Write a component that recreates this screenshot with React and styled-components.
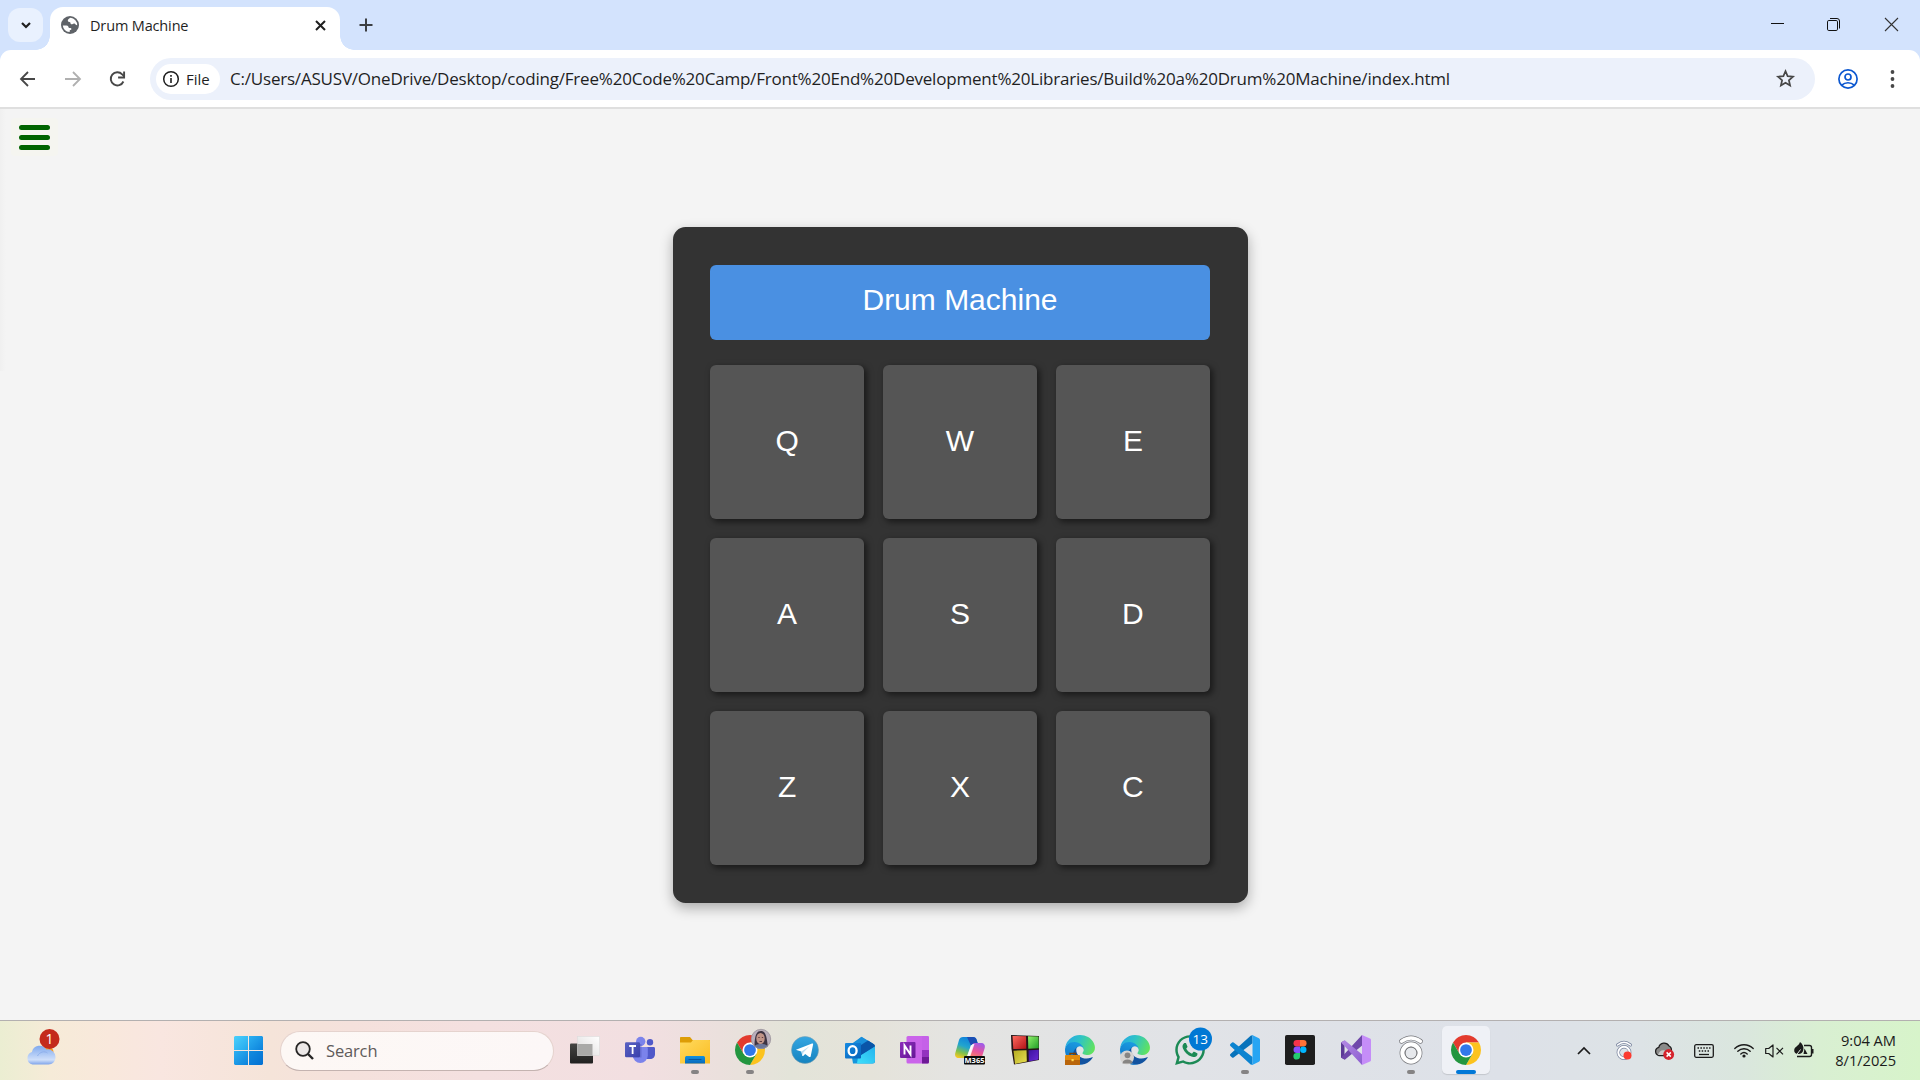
import React from "react";
import styled, { createGlobalStyle } from "styled-components";
import { FaWhatsapp } from "react-icons/fa";

const ui = `"Open Sans", "Noto Sans", sans-serif`;

const Global = createGlobalStyle`
  * { box-sizing: border-box; }
  body { margin: 0; background: #f4f4f4; font-family: ${ui}; overflow: hidden; }
  svg { display: block; flex: none; overflow: visible; }
`;

const Screen = styled.div`
  width: 1920px;
  height: 1080px;
  display: flex;
  flex-direction: column;
  overflow: hidden;
`;

/* ---------- browser frame ---------- */
const TabStrip = styled.div`
  height: 50px;
  background: #d3e3fd;
  display: flex;
  align-items: flex-start;
  padding-left: 8px;
`;
const TabSearch = styled.button`
  width: 35px;
  height: 34px;
  margin-top: 8px;
  border: 0;
  padding: 0;
  border-radius: 12px;
  background: #e9f1fe;
  display: grid;
  place-items: center;
`;
const Tab = styled.div`
  width: 290px;
  height: 43px;
  margin: 7px 0 0 7px;
  background: #fff;
  border-radius: 13px 13px 0 0;
  display: flex;
  align-items: center;
  padding: 0 14px 7px 11px;
  position: relative;
  &::before,
  &::after {
    content: "";
    position: absolute;
    bottom: 0;
    width: 14px;
    height: 14px;
  }
  &::before {
    left: -14px;
    background: radial-gradient(circle at 0 0, transparent 13.5px, #fff 14px);
  }
  &::after {
    right: -14px;
    background: radial-gradient(circle at 100% 0, transparent 13.5px, #fff 14px);
  }
`;
const TabTitle = styled.span`
  flex: 1;
  margin-left: 11px;
  padding-top: 1px;
  font-size: 14.5px;
  letter-spacing: ${(p) => p.$ls};
  color: #1f1f1f;
  line-height: 20px;
  white-space: nowrap;
`;
const NewTab = styled.div`
  margin: 18px 0 0 19px;
`;
const WindowButtons = styled.div`
  margin-left: auto;
  display: flex;
  height: 50px;
`;
const WindowButton = styled.div`
  width: 57px;
  height: 48px;
  display: grid;
  place-items: center;
`;
const ToolbarShell = styled.div`
  background: #d3e3fd;
`;
const Toolbar = styled.div`
  height: 57px;
  background: #fff;
  border-radius: 11px 11px 0 0;
  display: flex;
  align-items: center;
  padding: 0 17px 0 18px;
`;
const NavButtons = styled.div`
  display: flex;
  width: 132px;
  gap: 25px;
`;
const AddressBar = styled.div`
  width: 1665px;
  height: 42px;
  border-radius: 21px;
  background: #ecf1fb;
  display: flex;
  align-items: center;
  padding: 0 20px 0 6px;
`;
const FileChip = styled.div`
  width: 64px;
  height: 30px;
  border-radius: 15px;
  background: #fff;
  display: flex;
  align-items: center;
  padding-left: 7px;
  gap: 7px;
  font-size: 15px;
  font-weight: 500;
  color: #1f1f1f;
`;
const Url = styled.div`
  flex: 1;
  margin-left: 10px;
  padding-top: 1px;
  font-size: 17px;
  line-height: 24px;
  letter-spacing: ${(p) => p.$ls};
  color: #1f1f1f;
  white-space: nowrap;
`;
const ToolbarEnd = styled.div`
  display: flex;
  align-items: center;
  margin-left: 23px;
  gap: 24px;
`;
const Divider = styled.div`
  height: 2px;
  background: #dfdfdf;
`;

/* ---------- page ---------- */
const Page = styled.main`
  height: 911px;
  background: linear-gradient(90deg, #f0f0f0, #f4f4f4) 0 0 / 6px 262px no-repeat #f4f4f4;
  display: grid;
  grid-template-columns: 1fr 575px 1fr;
  align-items: start;
`;
const MenuButton = styled.button`
  width: 47px;
  height: 38px;
  margin: 9px 0 0 11px;
  border: 0;
  padding: 7px 8px 0;
  background: #f5f5f0;
  border-radius: 4px;
  display: flex;
  flex-direction: column;
  gap: 5px;
`;
const MenuBar = styled.span`
  width: 31px;
  height: 5px;
  border-radius: 2.5px;
  background: #006400;
`;
const Machine = styled.section`
  margin-top: 118px;
  height: 676px;
  border-radius: 12.5px;
  background: #333;
  padding: 38px 37.5px 37.5px;
  box-shadow: 0 5px 12.5px rgba(0, 0, 0, 0.3);
  font-family: "Liberation Sans", Arial, sans-serif;
  color: #fff;
  font-size: 30px;
`;
const Display = styled.div`
  height: 75px;
  border-radius: 6px;
  background: #4a90e2;
  text-align: center;
  line-height: 34px;
  padding-top: 18px;
`;
const Pads = styled.div`
  margin-top: 25px;
  display: grid;
  grid-template-columns: repeat(3, 1fr);
  grid-auto-rows: 154.2px;
  gap: 18.75px;
`;
const Pad = styled.button`
  border: 0;
  padding: 0 0 2px;
  border-radius: 6px;
  background: #555;
  color: #fff;
  font: inherit;
  line-height: 34px;
  box-shadow: 2.5px 2.5px 6.25px rgba(0, 0, 0, 0.5);
`;

/* ---------- taskbar ---------- */
const Taskbar = styled.footer`
  height: 60px;
  border-top: 1px solid #b3b0b0;
  background: linear-gradient(
    90deg,
    #ebeed2 0, #f6ebd8 50px, #f9e8dc 110px, #f9e6e0 160px, #f5e4d9 270px,
    #f5e1dc 350px, #f4e0e0 480px, #f2dfe1 640px, #ebe0dd 720px, #e3e4d9 790px,
    #e5e3da 870px, #e4e4e2 960px, #e1e3e7 1180px, #dde1e8 1500px,
    #dde3e6 1640px, #dae6de 1740px, #d9efd2 1820px, #d7f4ca 1920px
  );
  display: flex;
  align-items: center;
  padding: 0 24px 0 26px;
`;
const Weather = styled.div`
  width: 208px;
  height: 60px;
  padding-top: 14px;
`;
const SearchBox = styled.div`
  width: 274px;
  height: 40px;
  margin-left: 17px;
  border-radius: 20px;
  border: 1px solid #e5d3ce;
  border-bottom-color: #c4b3b0;
  background: linear-gradient(90deg, #fdf8f5, #fcf7f7);
  display: flex;
  align-items: center;
  padding-left: 14px;
  gap: 12px;
  font-size: 16.5px;
  letter-spacing: ${(p) => p.$ls};
  color: #5f5b5a;
`;
const Apps = styled.div`
  display: flex;
  margin-left: 3px;
`;
const AppButton = styled.div`
  width: 55px;
  height: 59px;
  padding-bottom: 1px;
  margin-left: ${(p) => p.$shift || 0}px;
  display: grid;
  place-items: center;
  position: relative;
`;
const ActiveTile = styled.div`
  width: 48px;
  height: 48px;
  border-radius: 5px;
  background: #eff1f6;
  box-shadow: 0 1px 1px rgba(0, 0, 0, 0.12);
  display: grid;
  place-items: center;
`;
const Running = styled.span`
  position: absolute;
  left: 50%;
  bottom: 6px;
  width: ${(p) => (p.$active ? 20 : 8)}px;
  height: 4px;
  border-radius: 2px;
  transform: translateX(-50%);
  background: ${(p) => (p.$active ? "#0078d7" : "#858384")};
`;
const Tray = styled.div`
  margin-left: auto;
  display: flex;
  align-items: center;
`;
const TrayItem = styled.div`
  width: ${(p) => p.$w}px;
  display: grid;
  place-items: center;
`;
const Clock = styled.div`
  width: 72px;
  padding-bottom: 2px;
  text-align: right;
  font-size: 14.7px;
  line-height: 20px;
  color: #1b1b1b;
  letter-spacing: ${(p) => p.$ls};
  white-space: nowrap;
`;

/* ---------- app icons ---------- */
const Chrome = () => (
  <>
    <path d="M3.22 12A24 24 0 0 1 44.78 12L24 12 24 24 13.6 30z" fill="#e33b2e" />
    <path d="M44.78 12A24 24 0 0 1 24 48L34.4 30 24 24V12z" fill="#fcc31e" />
    <path d="M24 48A24 24 0 0 1 3.22 12L13.6 30 24 24 34.4 30z" fill="#23963f" />
    <circle cx="24" cy="24" r="12" fill="#fff" />
    <circle cx="24" cy="24" r="9.4" fill="#3178ea" />
  </>
);
const Svg = ({ box = "0 0 30 30", w = 30, h = 30, children }) => (
  <svg width={w} height={h} viewBox={box} fill="none">{children}</svg>
);

const TaskView = () => (
  <Svg>
    <rect x="0" y="8.5" width="23" height="20" rx="1" fill="url(#tvd)" />
    <rect x="7.5" y="1.5" width="22" height="19" fill="url(#tvl)" stroke="#ddd" strokeWidth=".6" />
    <rect x="7.5" y="9" width="15" height="11.5" fill="#a9a9a7" />
    <defs>
      <linearGradient id="tvd" x1="0" y1="0" x2="0" y2="1"><stop stopColor="#454543" /><stop offset="1" stopColor="#20201f" /></linearGradient>
      <linearGradient id="tvl" x1="1" y1="0" x2="0" y2="1"><stop stopColor="#fff" /><stop offset="1" stopColor="#dcdad9" /></linearGradient>
    </defs>
  </Svg>
);
const Teams = () => (
  <Svg>
    <circle cx="25" cy="7.3" r="3.2" fill="#5059c9" />
    <path d="M20 12h8.500c1 0 1.500.6 1.500 1.500V19c0 3-2 5-5 5h-4z" fill="#5059c9" />
    <circle cx="15.700" cy="6.500" r="4.700" fill="#7b83eb" />
    <path d="M9 12h12.500c.8 0 1.300.5 1.300 1.300v7.200a7.500 7.500 0 0 1-15 0V13z" fill="#7b83eb" />
    <path d="M9 9h7.500v13.500H8z" fill="#4c52b5" opacity=".45" />
    <rect x="0" y="7.300" width="15" height="15" rx="1.300" fill="url(#tm)" />
    <path d="M4.200 11h6.800M7.600 11v8" stroke="#fff" strokeWidth="1.800" />
    <defs><linearGradient id="tm" x1="0" y1="0" x2="1" y2="1"><stop stopColor="#5a62c3" /><stop offset="1" stopColor="#3940ab" /></linearGradient></defs>
  </Svg>
);
const Folder = () => (
  <Svg>
    <path d="M0 3c0-.7.500-1 1-1h9l2.500 3H30v5H0z" fill="#dd9d06" />
    <path d="M0 7.500h11L13 5h16.500l.5.500V28.500H0z" fill="url(#fo)" />
    <path d="M5 28.500V23c0-1.400.8-2 2-2h16c1.200 0 2 .6 2 2v5.500z" fill="url(#fb)" />
    <path d="M9 24.500h12" stroke="#07579f" strokeWidth="1.200" strokeLinecap="round" />
    <defs>
      <linearGradient id="fo" x1="0" y1="0" x2="1" y2="1"><stop stopColor="#ffda5e" /><stop offset="1" stopColor="#fbbd22" /></linearGradient>
      <linearGradient id="fb" x1="0" y1="0" x2="0" y2="1"><stop stopColor="#1191df" /><stop offset="1" stopColor="#0869bb" /></linearGradient>
    </defs>
  </Svg>
);
const ChromeProfile = () => (
  <Svg>
    <g transform="scale(.625)"><Chrome /></g>
    <g clipPath="url(#av)">
      <circle cx="26" cy="4" r="10" fill="#b9aebb" />
      <path d="M19.500 15C19-1 22-4 26-4s6 4 7 19z" fill="#3d3342" />
      <ellipse cx="25.500" cy="3.500" rx="4.200" ry="5.500" fill="#c09488" />
      <path d="M17 14c2-4 5-5 9-5s7 1 10 5z" fill="#6a7699" />
      <path d="M23.300 2.500h1.400M26.800 2.500h1.400M24.500 6.500h2.500" stroke="#54363c" strokeWidth=".9" />
    </g>
    <circle cx="26" cy="4" r="9.700" stroke="#9c969c" strokeWidth=".8" />
    <defs><clipPath id="av"><circle cx="26" cy="4" r="10" /></clipPath></defs>
  </Svg>
);
const Telegram = () => (
  <Svg>
    <circle cx="15" cy="15" r="13.500" fill="url(#tg)" stroke="#7d9cab" strokeWidth=".5" />
    <path d="M6 14.800 22 8.500c.8-.3 1.300.2 1.100 1.100l-2.400 11.600c-.2.900-.8 1.100-1.500.7l-4-3-2 2c-.4.400-.9.200-1-.4l-.9-4-4.900-1.500c-.5-.1-.6-.2-.4-.2z" fill="#fff" />
    <path d="m11.500 16.500 8.200-5.400-6.300 6.300-.6 3z" fill="#bcdcf0" />
    <defs><linearGradient id="tg" x1="0" y1="0" x2="0" y2="1"><stop stopColor="#35a6e2" /><stop offset="1" stopColor="#1583bf" /></linearGradient></defs>
  </Svg>
);
const Outlook = () => (
  <Svg>
    <path d="M5 11 16.500 2 29 9.500 30 12v14.500a2 2 0 0 1-2 2H8z" fill="#1596dd" />
    <path d="m5 10 11.500-8.200L28 8.700 13 18z" fill="#1a8fdb" />
    <path d="m13 12 10-6.500 6 3.800c.8.600 1 1.300 1 2.200L14 22z" fill="#0a55a8" />
    <path d="M13 22 30 11.500V25a3.500 3.500 0 0 1-3.500 3.500H12z" fill="url(#ol)" />
    <rect x="0" y="8" width="16" height="15.500" rx="1" fill="url(#ob)" />
    <ellipse cx="7.600" cy="15.700" rx="4" ry="4.500" stroke="#fff" strokeWidth="2.300" />
    <defs>
      <linearGradient id="ol" x1="1" y1="0" x2="0" y2="1"><stop stopColor="#25b2ed" /><stop offset="1" stopColor="#3fe0fb" /></linearGradient>
      <linearGradient id="ob" x1="0" y1="0" x2="1" y2="1"><stop stopColor="#168be2" /><stop offset="1" stopColor="#0762b9" /></linearGradient>
    </defs>
  </Svg>
);
const OneNote = () => (
  <Svg>
    <rect x="6.500" y="1" width="22.500" height="27.500" rx="1.500" fill="#ca64ea" />
    <path d="M22 1h5.500A1.500 1.500 0 0 1 29 2.500V15h-7z" fill="#c561e8" />
    <path d="M22 15h7v7h-7z" fill="#9332bf" />
    <path d="M22 22h7v5a1.500 1.500 0 0 1-1.500 1.500H22z" fill="#6e1a96" />
    <rect x="0" y="7" width="15.500" height="16" rx="1" fill="url(#on)" />
    <path d="M4.500 19.500v-9l6 9v-9" stroke="#fff" strokeWidth="1.900" />
    <defs><linearGradient id="on" x1="0" y1="0" x2="1" y2="1"><stop stopColor="#8b2cba" /><stop offset="1" stopColor="#651796" /></linearGradient></defs>
  </Svg>
);
const BadgeText = styled.text`
  font-family: ${ui};
  font-weight: ${(p) => p.$weight || 400};
  font-size: ${(p) => p.$size}px;
  fill: #fff;
  text-anchor: middle;
`;
const M365 = () => (
  <Svg>
    <path d="M8 2h10c2 0 3 1 3.500 2.500L23 9h-4c-2 0-3 1-3.500 2.500L12 21c-.6 1.500-1.500 2-3 2H4c-3 0-4.500-2-3.700-5L4 5c.6-2 2-3 4-3z" fill="url(#c1)" />
    <path d="M12 2h6c2 0 3 1 3.500 2.500L23 9h-4c-1.500 0-2.500.6-3 1.800z" fill="#1b4eb3" />
    <path d="M18.500 8H26c3 0 4.500 2 3.700 5l-2.500 8c-.6 2-2 3-4 3H12c1 0 2-1 2.500-2.500L18 9.500z" fill="url(#c2)" />
    <path d="m16 10.500 2-1.500h1.500L15 22h-3z" fill="#fff" opacity=".85" />
    <rect x="9" y="21" width="21" height="8.500" rx="1" fill="#0b0b0b" />
    <BadgeText x="19.500" y="28" $size="7.5" $weight="700">M365</BadgeText>
    <defs>
      <linearGradient id="c1" x1=".6" y1="0" x2=".2" y2="1"><stop stopColor="#0e7fdd" /><stop offset=".45" stopColor="#22a5ce" /><stop offset=".75" stopColor="#82c14a" /><stop offset="1" stopColor="#f5c822" /></linearGradient>
      <linearGradient id="c2" x1=".7" y1="0" x2=".3" y2="1"><stop stopColor="#a05ce8" /><stop offset=".5" stopColor="#e8559e" /><stop offset="1" stopColor="#fd8a55" /></linearGradient>
    </defs>
  </Svg>
);
const Cube = () => (
  <Svg>
    <path d="m1 0 28 1v24L4 29.500 1.500 14z" fill="#241416" />
    <path d="m2.500 1 13.500.300.300 12.500-13 .200z" fill="url(#q1)" />
    <path d="m18 1.300 10.500.2.300 11.700-10.500.5z" fill="url(#q2)" />
    <path d="m3.500 15.700 13-.4.300 11.200L5 29z" fill="url(#q3)" />
    <path d="m18.500 15.200 10.300-.4-.3 9.700-9.700 2z" fill="url(#q4)" />
    <defs>
      <linearGradient id="q1" x1="0" y1="0" x2="1" y2="1"><stop stopColor="#ff6a5e" /><stop offset="1" stopColor="#b21217" /></linearGradient>
      <linearGradient id="q2" x1="0" y1="0" x2="1" y2="1"><stop stopColor="#8ff06a" /><stop offset="1" stopColor="#1f9d26" /></linearGradient>
      <linearGradient id="q3" x1="0" y1="0" x2="1" y2="1"><stop stopColor="#b5aa22" /><stop offset="1" stopColor="#e8e052" /></linearGradient>
      <linearGradient id="q4" x1="0" y1="0" x2="1" y2="1"><stop stopColor="#3c129e" /><stop offset="1" stopColor="#6a2ad8" /></linearGradient>
    </defs>
  </Svg>
);
const EdgeLogo = ({ id }) => (
  <g transform="scale(.117)">
    <path d="M231 190.500c-3.400 1.800-6.900 3.400-10.500 4.700a101.900 101.900 0 0 1-35.900 6.400c-47.300 0-88.500-32.500-88.500-74.300 0-11.900 6.400-22.300 16.300-28.100-43 1.800-54 46.400-54 72.500 0 73.900 68.100 81.400 82.800 81.400 7.900 0 19.800-2.300 27-4.600l1.300-.4a128.300 128.300 0 0 0 66.600-52.800 4 4 0 0 0-5.100-5.800z" fill="#1253a0" />
    <path d="M105.700 241.400a79.200 79.200 0 0 1-22.700-21.300 80.700 80.700 0 0 1 29.500-120c3.200-1.500 8.500-4.100 15.600-4a32.400 32.400 0 0 1 25.700 13 31.900 31.900 0 0 1 6.300 18.700c0-.2 24.500-79.600-80-79.600-43.900 0-80 41.600-80 78.200-.2 19.300 4 38.500 12.100 56a128 128 0 0 0 156.200 67 75.500 75.500 0 0 1-62.600-8z" fill={`url(#${id}b)`} />
    <path d="M152.300 148.900c-.9 1-3.400 2.500-3.400 5.600 0 2.600 1.700 5.200 4.800 7.300 14.300 10 41.400 8.600 41.500 8.600a59.600 59.600 0 0 0 30.300-8.300 61.400 61.400 0 0 0 30.400-52.900c.3-22.400-8-37.300-11.300-43.900C223.600 23.900 177.700 0 128 0A128 128 0 0 0 0 126.200c.5-36.500 36.800-66 80-66 3.500 0 23.500.3 42 10.100 16.300 8.600 24.900 18.900 30.800 29.200 6.200 10.700 7.300 24.100 7.300 29.500 0 5.300-2.700 13.300-7.800 19.900z" fill={`url(#${id}a)`} />
    <defs>
      <linearGradient id={`${id}a`} x1="0" y1=".3" x2="1" y2=".6"><stop stopColor="#27a9e6" /><stop offset=".45" stopColor="#2fc4c4" /><stop offset="1" stopColor="#62e35c" /></linearGradient>
      <linearGradient id={`${id}b`} x1=".6" y1="0" x2=".3" y2="1"><stop stopColor="#1b9de2" /><stop offset="1" stopColor="#0f6fc4" /></linearGradient>
    </defs>
  </g>
);
const EdgeWork = () => (
  <Svg>
    <EdgeLogo id="ew" />
    <path d="M5 20v-1.500h5.500V20" stroke="#7c4104" strokeWidth="1.300" />
    <rect x="0" y="20" width="15" height="10" rx=".8" fill="#e08a0c" />
    <path d="M0 25h15v5H0z" fill="#b9650a" />
    <rect x="6.500" y="24" width="2.200" height="2.200" fill="#ffd44a" />
  </Svg>
);
const EdgeGuest = () => (
  <Svg>
    <EdgeLogo id="eg" />
    <circle cx="7" cy="22.500" r="7" fill="#d5d3d1" />
    <circle cx="7.500" cy="20.300" r="2.900" fill="#878583" />
    <path d="M2.500 28.500c.3-3 2-4 5-4s4.700 1 5 4z" fill="#878583" />
  </Svg>
);
const WhatsApp = () => (
  <Svg>
    <FaWhatsapp x="-2" y="-2" size={34} color="#1c8a55" />
    <circle cx="25.500" cy="4" r="11.500" fill="#0078d4" />
    <BadgeText x="25.300" y="8.800" $size="13.5">13</BadgeText>
  </Svg>
);
const VSCode = () => (
  <Svg box="0 0 24 24">
    <path d="M18 6.500 2.900 18a1 1 0 0 1-1.250-.06L.33 16.740a1 1 0 0 1 0-1.480L16.500.5 18 .2z" fill="#0873bb" />
    <path d="M18 17.500 2.900 6a1 1 0 0 0-1.250.06L.33 7.260a1 1 0 0 0 0 1.480L16.500 23.500l1.500.3z" fill="#0b83d0" />
    <path d="M23.150 2.590 18.210.21a1.500 1.500 0 0 0-1.700.29c.55-.5 1.500-.15 1.500.65v21.700c0 .8-.95 1.150-1.500.65.45.44 1.130.56 1.700.29l4.940-2.380A1.500 1.500 0 0 0 24 20.060V3.940a1.500 1.500 0 0 0-.85-1.350z" fill="#27a5f3" />
  </Svg>
);
const Figma = () => (
  <Svg>
    <rect width="30" height="30" rx="1.800" fill="#1e1e1e" />
    <path d="M15 5h-3.200a3.200 3.200 0 0 0 0 6.500H15z" fill="#f5334b" />
    <path d="M15 5h3.300a3.200 3.200 0 0 1 0 6.500H15z" fill="#ff7237" />
    <path d="M15 11.500h-3.200a3.200 3.200 0 0 0 0 6.500H15z" fill="#874fff" />
    <circle cx="18.300" cy="14.800" r="3.200" fill="#00b6ff" />
    <path d="M15 18h-3.200a3.300 3.300 0 1 0 3.200 3.300z" fill="#24cb71" />
  </Svg>
);
const VisualStudio = () => (
  <Svg>
    <path d="M0 7.500 3.500 5.500v19L0 22.500z" fill="#5c3a96" />
    <path d="M3.800 24.700 0 22.500 3 19.500 21 0 23 9z" fill="#6f48aa" />
    <path d="M3.800 5.300 0 7.500 3 10.500 21 30 23 21z" fill="url(#vs)" />
    <path d="m21 0 8 3.500c.7.300 1 .8 1 1.500v20c0 .7-.3 1.200-1 1.500L21 30z" fill="#c58df8" />
    <defs><linearGradient id="vs" x1="0" y1="0" x2="1" y2="1"><stop stopColor="#b48ae4" /><stop offset="1" stopColor="#8a5bcf" /></linearGradient></defs>
  </Svg>
);
const CastRings = () => (
  <Svg w={26} box="2 0 26 30">
    <path d="M5.500 6.300Q15-.5 24.500 6.300" stroke="#77787c" strokeWidth="4.800" strokeLinecap="round" />
    <path d="M5.500 6.300Q15-.5 24.500 6.300" stroke="#fff" strokeWidth="3.400" strokeLinecap="round" />
    <circle cx="15" cy="18" r="8.600" stroke="#77787c" strokeWidth="5.600" />
    <circle cx="15" cy="18" r="8.600" stroke="#fff" strokeWidth="4.200" />
    <circle cx="15" cy="18" r="5.800" stroke="#77787c" strokeWidth=".9" fill="#e6e8ec" />
  </Svg>
);
const ChromePlain = () => (
  <Svg box="0 0 48 48"><Chrome /></Svg>
);

const apps = [
  { icon: TaskView }, { icon: Teams }, { icon: Folder, running: true },
  { icon: ChromeProfile, running: true }, { icon: Telegram }, { icon: Outlook },
  { icon: OneNote }, { icon: M365 }, { icon: Cube }, { icon: EdgeWork },
  { icon: EdgeGuest }, { icon: WhatsApp }, { icon: VSCode, running: true },
  { icon: Figma }, { icon: VisualStudio, shift: 1 }, { icon: CastRings, running: true },
  { icon: ChromePlain, running: true, active: true },
];
const pads = ["Q", "W", "E", "A", "S", "D", "Z", "X", "C"];

export default function App() {
  return (
    <Screen>
      <Global />
      <TabStrip>
        <TabSearch>
          <Svg w={10} h={6} box="0 0 10 6"><path d="m1 1 4 4 4-4" stroke="#1f1f1f" strokeWidth="2.200" /></Svg>
        </TabSearch>
        <Tab>
          <Svg w={18} h={18} box="0 0 18 18">
            <circle cx="9" cy="9" r="9" fill="#5f6368" />
            <path d="M9.500 1.800c-1.200.8-2.800 1.500-2.700 3 .1 1.300 1.500.9 2.300 1.500.7.600.1 1.700 1.200 2 1.300.3 1.900-1.300 3.200-.7 1.200.5.800 1.600 2.700 1.600A7.200 7.200 0 0 0 9.500 1.800zM1.800 9.500c1.500 0 3.300-.3 4.700.2 1.200.5.700 2 1.900 2.300.9.300 1.700-.2 2 .7.200.8-.5 1.300-1.400 1.300-.6.800.2 1.500-.7 2.100A7.200 7.200 0 0 1 1.800 9.500z" fill="#fff" />
          </Svg>
          <TabTitle $ls="-0.15px">Drum Machine</TabTitle>
          <Svg w={11} h={11} box="0 0 11 11"><path d="m1 1 9 9M10 1l-9 9" stroke="#1f1f1f" strokeWidth="2" /></Svg>
        </Tab>
        <NewTab>
          <Svg w={14} h={14} box="0 0 14 14"><path d="M7 .500v13M.500 7h13" stroke="#3c3f43" strokeWidth="2" /></Svg>
        </NewTab>
        <WindowButtons>
          <WindowButton><Svg w={13} h={13} box="0 0 13 13"><path d="M0 5.500h13" stroke="#111" /></Svg></WindowButton>
          <WindowButton>
            <Svg w={13} h={13} box="1 0 13 13">
              <rect x=".5" y="2.500" width="10" height="10" rx="1.300" stroke="#111" />
              <path d="M3 .500h7a2.500 2.500 0 0 1 2.500 2.500v7.500" stroke="#111" />
            </Svg>
          </WindowButton>
          <WindowButton><Svg w={13} h={13} box="0 0 13 13"><path d="m0 0 13 13M13 0 0 13" stroke="#333" strokeWidth="1.100" /></Svg></WindowButton>
        </WindowButtons>
      </TabStrip>
      <ToolbarShell>
        <Toolbar>
          <NavButtons>
            <Svg w={20} h={20} box="0 0 20 20"><path d="M17 10H3.500M10 3l-7 7 7 7" stroke="#474747" strokeWidth="1.800" /></Svg>
            <Svg w={20} h={20} box="0 0 20 20"><path d="M2 10h14.500M10 3l7 7-7 7" stroke="#b0b0b0" strokeWidth="1.800" /></Svg>
            <Svg w={20} h={20} box="0.500 0 20 20">
              <path d="M15.900 12.500A6.600 6.600 0 1 1 14.700 5.300L17 7.600" stroke="#474747" strokeWidth="1.900" />
              <path d="M16.600 2.500v6h-6" stroke="#474747" strokeWidth="1.900" />
            </Svg>
          </NavButtons>
          <AddressBar>
            <FileChip>
              <Svg w={16} h={16} box="0 0 16 16">
                <circle cx="8" cy="8" r="7.300" stroke="#1f1f1f" strokeWidth="1.500" />
                <path d="M8 7v5M8 4v1.700" stroke="#1f1f1f" strokeWidth="1.600" />
              </Svg>
              File
            </FileChip>
            <Url $ls="-0.203px">C:/Users/ASUSV/OneDrive/Desktop/coding/Free%20Code%20Camp/Front%20End%20Development%20Libraries/Build%20a%20Drum%20Machine/index.html</Url>
            <Svg w={19} h={19} box="0 0 19 19">
              <path d="m9.500 2.200 2.100 5 5.400.5-4.100 3.600 1.200 5.300-4.600-2.800-4.600 2.800 1.200-5.300L2 7.700l5.400-.5z" stroke="#474747" strokeWidth="1.700" />
            </Svg>
          </AddressBar>
          <ToolbarEnd>
            <Svg w={20} h={20} box="0 0 20 20">
              <circle cx="10" cy="10" r="9.100" stroke="#0b57d0" strokeWidth="1.700" />
              <circle cx="10" cy="8" r="3" stroke="#0b57d0" strokeWidth="1.700" />
              <path d="M3.800 16.200c3.400-3.300 9-3.300 12.400 0" stroke="#0b57d0" strokeWidth="1.700" />
            </Svg>
            <Svg w={20} h={20} box="0 0 20 20"><g fill="#474747"><circle cx="10.500" cy="3" r="1.900" /><circle cx="10.500" cy="10" r="1.900" /><circle cx="10.500" cy="17" r="1.900" /></g></Svg>
          </ToolbarEnd>
        </Toolbar>
      </ToolbarShell>
      <Divider />
      <Page>
        <MenuButton><MenuBar /><MenuBar /><MenuBar /></MenuButton>
        <Machine>
          <Display>Drum Machine</Display>
          <Pads>{pads.map((k) => <Pad key={k}>{k}</Pad>)}</Pads>
        </Machine>
      </Page>
      <Taskbar>
        <Weather>
          <Svg w={32} h={30} box="0.500 0 32 30">
            <circle cx="22" cy="17" r="6" fill="#f59b23" />
            <path d="M7 29.500a6.500 6.500 0 0 1-.6-12.500A8 8 0 0 1 21 14.500a7.600 7.600 0 0 1 9 7.500c0 4.500-3 7.500-7 7.500z" fill="url(#wc)" />
            <path d="M12 21c2-4 7-5.500 10-3" stroke="#8fb0ec" strokeWidth="1" />
            <circle cx="24" cy="4" r="10" fill="#c42b1c" />
            <BadgeText x="24" y="9" $size="14">1</BadgeText>
            <defs><linearGradient id="wc" x1="0" y1="0" x2="0" y2="1"><stop stopColor="#7fa9ee" /><stop offset=".75" stopColor="#cfdffa" /><stop offset="1" stopColor="#7fa4ea" /></linearGradient></defs>
          </Svg>
        </Weather>
        <Svg w={29} h={29} box="0 0 29 29">
          <path d="M1 0h13v14H0V1z" fill="url(#w1)" /><path d="M15 0h13l1 1v13H15z" fill="url(#w2)" />
          <path d="M0 15h14v14H1l-1-1z" fill="url(#w2)" /><path d="M15 15h14v13l-1 1H15z" fill="url(#w3)" />
          <defs>
            <linearGradient id="w1" x1="0" y1="0" x2="1" y2="1"><stop stopColor="#4cd0fb" /><stop offset="1" stopColor="#23a8ee" /></linearGradient>
            <linearGradient id="w2" x1="0" y1="0" x2="1" y2="1"><stop stopColor="#2cb0f1" /><stop offset="1" stopColor="#0c82dc" /></linearGradient>
            <linearGradient id="w3" x1="0" y1="0" x2="1" y2="1"><stop stopColor="#138cdf" /><stop offset="1" stopColor="#0370d2" /></linearGradient>
          </defs>
        </Svg>
        <SearchBox $ls="-0.15px">
          <Svg w={19} h={19} box="0 0 19 19">
            <circle cx="8" cy="8" r="6.800" stroke="#262524" strokeWidth="1.800" fill="#ece8e7" />
            <path d="m13 13 5 5" stroke="#262524" strokeWidth="2.400" />
          </Svg>
          Search
        </SearchBox>
        <Apps>
          {apps.map(({ icon: Icon, running, active, shift }, i) => (
            <AppButton key={i} $shift={shift}>
              {active ? <ActiveTile><Icon /></ActiveTile> : <Icon />}
              {running && <Running $active={active} />}
            </AppButton>
          ))}
        </Apps>
        <Tray>
          <TrayItem $w={40}><Svg w={14} h={8} box="0 0 14 8"><path d="m1 7 6-6 6 6" stroke="#1b1b1b" strokeWidth="1.700" /></Svg></TrayItem>
          <TrayItem $w={40}>
            <Svg w={16} h={19} box="0 0 16 19">
              <path d="M1.500 4Q8-1.500 14.500 4" stroke="#77829c" strokeWidth="3" strokeLinecap="round" />
              <path d="M1.500 4Q8-1.500 14.500 4" stroke="#fff" strokeWidth="1.600" strokeLinecap="round" />
              <circle cx="8" cy="11.500" r="5.700" stroke="#77829c" strokeWidth="3.400" />
              <circle cx="8" cy="11.500" r="5.700" stroke="#fff" strokeWidth="2" />
              <circle cx="11.500" cy="14.500" r="4" fill="#fb3b30" />
            </Svg>
          </TrayItem>
          <TrayItem $w={40}>
            <Svg w={20} h={18} box="0 0 20 18">
              <path d="M5 13.500a4.200 4.200 0 0 1-.2-8.200A5.500 5.500 0 0 1 15 4a4 4 0 0 1 2 5.500l-5 4z" fill="#8a8a89" stroke="#1f1f1f" strokeWidth="1.300" />
              <path d="M4 13c1-4 4-5.500 7-4.500v4.500z" fill="#c9cac9" />
              <circle cx="14.700" cy="12.500" r="5.400" fill="#d5232c" />
              <path d="m12.600 10.400 4.200 4.200M16.800 10.400l-4.200 4.200" stroke="#fff" strokeWidth="1.500" />
            </Svg>
          </TrayItem>
          <TrayItem $w={40}>
            <Svg w={20} h={14} box="0 0 20 14">
              <rect x=".7" y=".7" width="18.600" height="12.600" rx="1.500" stroke="#1b1b1b" strokeWidth="1.300" />
              <path d="M3.500 4h13M4.800 7h11" stroke="#1b1b1b" strokeWidth="1.500" strokeDasharray="1.500 1.400" />
              <path d="M5 10.500h10" stroke="#1b1b1b" strokeWidth="1.300" />
            </Svg>
          </TrayItem>
          <TrayItem $w={40}>
            <Svg w={20} h={15} box="0 0 20 15">
              <g stroke="#1b1b1b" strokeWidth="1.400" strokeLinecap="round">
                <path d="M.8 5.500a13 13 0 0 1 18.400 0M3.800 8.300a9 9 0 0 1 12.400 0M6.800 11a4.800 4.800 0 0 1 6.400 0" />
              </g>
              <circle cx="10" cy="13" r="1.600" fill="#1b1b1b" />
            </Svg>
          </TrayItem>
          <TrayItem $w={20}>
            <Svg w={19} h={14} box="0 0 19 14">
              <path d="M.700 4.500h3L8 1v12L3.700 9.500h-3z" stroke="#1b1b1b" strokeWidth="1.200" strokeLinejoin="round" />
              <path d="m11.500 3.800 6.500 6.500M18 3.800l-6.500 6.500" stroke="#1b1b1b" strokeWidth="1.200" />
            </Svg>
          </TrayItem>
          <TrayItem $w={40}>
            <Svg w={20} h={17} box="0 0.500 20 17">
              <path d="M10 4h5.500a2 2 0 0 1 2 2v7a2 2 0 0 1-2 2H3" stroke="#1b1b1b" strokeWidth="1.400" />
              <path d="M18 7.500h1.500V12H18zM10.500 7 13.500 12.500h-4z" fill="#1b1b1b" />
              <path d="M6 .500c2.500 2 4 4.500 3.300 8-.5 2.500-2.300 4-4.800 4C1.500 12.500 0 11 .2 8.500.5 5 5 4.500 6 .500z" fill="#1b1b1b" />
              <path d="M1 15.500 6.500 8" stroke="#dbe9dc" strokeWidth="1" />
            </Svg>
          </TrayItem>
          <Clock $ls="-0.05px">9:04 AM<br />8/1/2025</Clock>
        </Tray>
      </Taskbar>
    </Screen>
  );
}
